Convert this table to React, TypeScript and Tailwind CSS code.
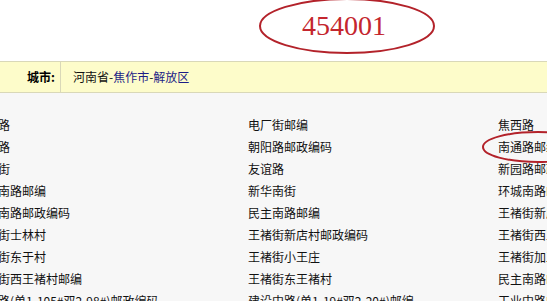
import React from 'react';

const rows: [string, string, string][] = [
  ['塔南路', '电厂街邮编', '焦西路'],
  ['民主路', '朝阳路邮政编码', '南通路邮编'],
  ['王褚街', '友谊路', '新园路邮政编码'],
  ['焦东南路邮编', '新华南街', '环城南路邮编'],
  ['焦东南路邮政编码', '民主南路邮编', '王褚街新店村'],
  ['王褚街士林村', '王褚街新店村邮政编码', '王褚街西王褚村'],
  ['王褚街东于村', '王褚街小王庄', '王褚街加工区'],
  ['王褚街西王褚村邮编', '王褚街东王褚村', '民主南路邮编'],
  ['中原路(单1-105#双2-98#)邮政编码', '建设中路(单1-19#双2-20#)邮编', '工业中路邮编'],
];

const App: React.FC = () => {
  return (
    <div
      className="relative w-[547px] h-[301px] overflow-hidden bg-white text-[12px] text-[#111]"
      style={{ fontFamily: '"Noto Sans CJK SC", "Liberation Sans", sans-serif' }}
    >
      {/* postcode banner */}
      <div className="h-[61px] flex items-start pl-[302px] pt-[10px]">
        <span className="text-[28px] leading-[32px] text-[#c4262e]" style={{ fontFamily: '"Liberation Serif", serif' }}>
          454001
        </span>
      </div>

      {/* city bar */}
      <div className="h-[32px] flex items-center bg-[#fdfcca] border-y border-[#d9d8b8]">
        <span className="w-[60px] pl-[27px] font-bold text-black">城市:</span>
        <span className="h-full border-l border-[#d9d8b8]" />
        <span className="pl-[12px]">
          河南省-<a className="text-[#1c1c86]">焦作市</a>-<a className="text-[#1c1c86]">解放区</a>
        </span>
      </div>

      {/* street list */}
      <div className="bg-[#f7f7f7] h-full pt-[21px]">
        <div className="-ml-[26px] grid grid-cols-[274px_250px_250px]">
          {rows.map((r, i) => (
            <React.Fragment key={i}>
              {r.map((t, j) => (
                <div key={j} className="h-[22px] leading-[22px] whitespace-nowrap">
                  {t}
                </div>
              ))}
            </React.Fragment>
          ))}
        </div>
      </div>

      {/* hand drawn circles */}
      <svg className="absolute left-0 top-0 pointer-events-none" width="547" height="301">
        <ellipse cx="347" cy="26" rx="87" ry="27" fill="none" stroke="#b3222a" strokeWidth="2" />
        <ellipse cx="538" cy="147" rx="55" ry="15" fill="none" stroke="#b3222a" strokeWidth="2" />
      </svg>
    </div>
  );
};

export default App;
